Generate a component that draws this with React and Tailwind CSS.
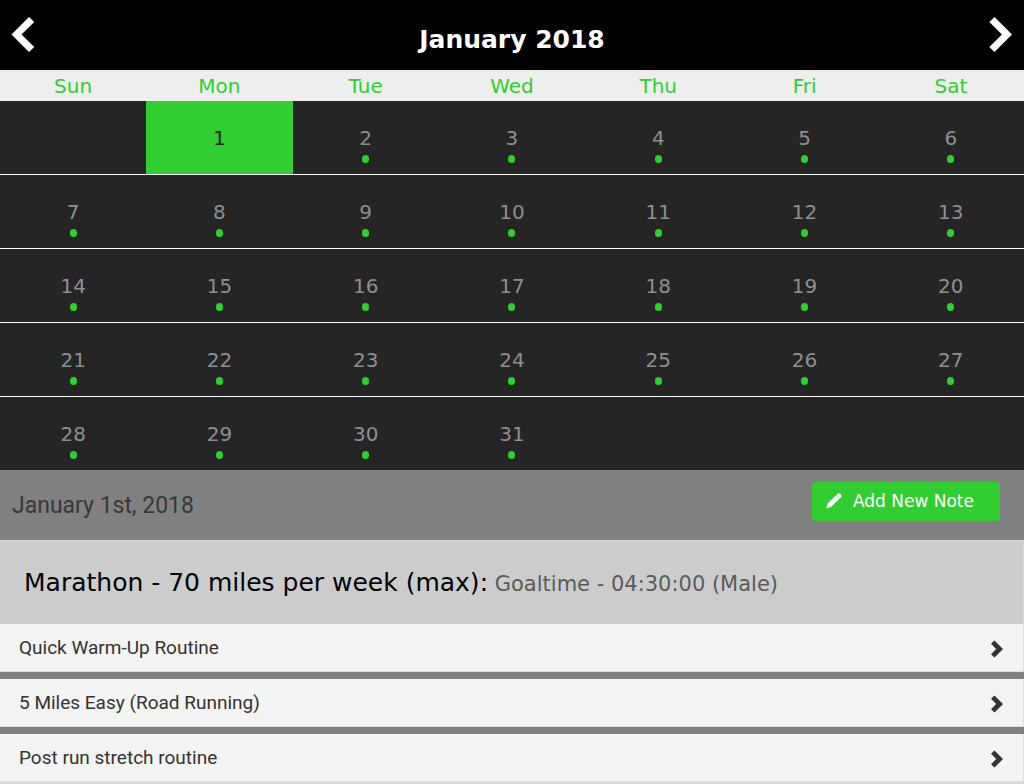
import React, { useState } from 'react';

const WEEKDAYS = ['Sun', 'Mon', 'Tue', 'Wed', 'Thu', 'Fri', 'Sat'];

const ROUTINES = [
  'Quick Warm-Up Routine',
  '5 Miles Easy (Road Running)',
  'Post run stretch routine',
];

// January 2018 starts on a Monday
const FIRST_WEEKDAY = 1;
const DAYS_IN_MONTH = 31;

const buildWeeks = () => {
  const weeks = [];
  for (let start = 1 - FIRST_WEEKDAY; start <= DAYS_IN_MONTH; start += 7) {
    weeks.push(
      WEEKDAYS.map((_, i) => {
        const day = start + i;
        return day >= 1 && day <= DAYS_IN_MONTH ? day : null;
      })
    );
  }
  return weeks;
};

const ordinal = (day) => {
  if (day % 10 === 1 && day !== 11) return `${day}st`;
  if (day % 10 === 2 && day !== 12) return `${day}nd`;
  if (day % 10 === 3 && day !== 13) return `${day}rd`;
  return `${day}th`;
};

const PrevIcon = () => (
  <svg viewBox="0 0 24 36" className="w-6 h-9" fill="currentColor" aria-hidden="true">
    <path d="M18 0L23.2 5L10.5 17.5L23.2 30L18 35L0.5 17.5Z" />
  </svg>
);

const NextIcon = () => (
  <svg viewBox="0 0 24 36" className="w-6 h-9" fill="currentColor" aria-hidden="true">
    <path d="M5.5 0L0.3 5L13 17.5L0.3 30L5.5 35L23 17.5Z" />
  </svg>
);

const RowIcon = () => (
  <svg viewBox="0 0 12 18" className="w-3 h-[18px]" fill="currentColor" aria-hidden="true">
    <path d="M3.5 0.5L12 9L3.5 17.5L0 14.3L5.2 9L0 3.7Z" />
  </svg>
);

const PencilIcon = () => (
  <svg viewBox="0 0 16 18" className="w-4 h-[18px]" fill="currentColor" aria-hidden="true">
    <path d="M0.2 15.6L1.6 10.4L10 2.2L13.6 5.6L5.2 13.8Z" />
    <path d="M10.3 1.9L11.6 0.7Q12.9 -0.3 14.5 1.1Q16.2 2.7 15.1 4.1L13.9 5.3Z" />
  </svg>
);

const DayCell = ({ day, selected, onSelect }) => (
  <td className="border-b border-white p-0 group-last:border-b-0">
    {day && (
      <button
        type="button"
        onClick={() => onSelect(day)}
        className={`flex h-[73px] w-full flex-col items-center pt-[23px] ${
          selected ? 'bg-[#32cd32] text-[#252525]' : 'text-[#8f8f8f]'
        }`}
      >
        <span className="leading-7">{day}</span>
        {!selected && <span className="mt-[3px] h-2 w-[7px] rounded-full bg-[#32cd32]" />}
      </button>
    )}
  </td>
);

const App = () => {
  const [selected, setSelected] = useState(1);

  return (
    <div className="min-h-screen bg-[#d8d8d8] font-['DejaVu_Sans',Verdana,sans-serif]">
      <header className="flex h-[70px] items-center justify-between bg-black px-[11px] pb-px text-white">
        <button type="button" aria-label="Previous month">
          <PrevIcon />
        </button>
        <h1 className="pt-2.5 text-[25px] font-bold">January 2018</h1>
        <button type="button" aria-label="Next month">
          <NextIcon />
        </button>
      </header>

      <table className="w-full table-fixed border-separate border-spacing-0 bg-[#252525] text-xl">
        <thead>
          <tr className="h-[31px] bg-[#eee] text-[#32cd32]">
            {WEEKDAYS.map((name) => (
              <th key={name} scope="col" className="p-0 font-normal leading-7">
                {name}
              </th>
            ))}
          </tr>
        </thead>
        <tbody>
          {buildWeeks().map((week, i) => (
            <tr key={i} className="group">
              {week.map((day, j) => (
                <DayCell key={j} day={day} selected={day === selected} onSelect={setSelected} />
              ))}
            </tr>
          ))}
        </tbody>
      </table>

      <section className="flex h-[70px] items-start justify-between bg-[#808080] pl-3 pr-6 pt-3">
        <h2 className="pt-1.5 font-[Roboto,sans-serif] text-[23px] leading-9 text-[#383838]">
          January {ordinal(selected)}, 2018
        </h2>
        <button
          type="button"
          className="flex h-[39px] items-center gap-[11px] rounded bg-[#32cd32] pl-3.5 pr-[26px] text-[17px] text-white"
        >
          <PencilIcon />
          Add New Note
        </button>
      </section>

      <section className="flex h-[84px] items-center border-t border-r border-[#d8d8d8] bg-[#ccc] px-6 pt-0.5">
        <p className="text-[25px] leading-9 text-black">
          Marathon - 70 miles per week (max):
          <span className="text-[21px] text-[#5a5a5a]"> Goaltime - 04:30:00 (Male)</span>
        </p>
      </section>

      <ul className="flex flex-col gap-[7px] bg-[#808080] font-[Roboto,sans-serif] text-[19px] text-[#333]">
        {ROUTINES.map((name) => (
          <li key={name}>
            <button
              type="button"
              className="flex h-12 w-full items-center justify-between border-b border-r border-[#ddd] bg-[#f4f4f4] pl-[19px] pr-5 pt-0.5 text-left"
            >
              {name}
              <RowIcon />
            </button>
          </li>
        ))}
      </ul>
    </div>
  );
};

export default App;
